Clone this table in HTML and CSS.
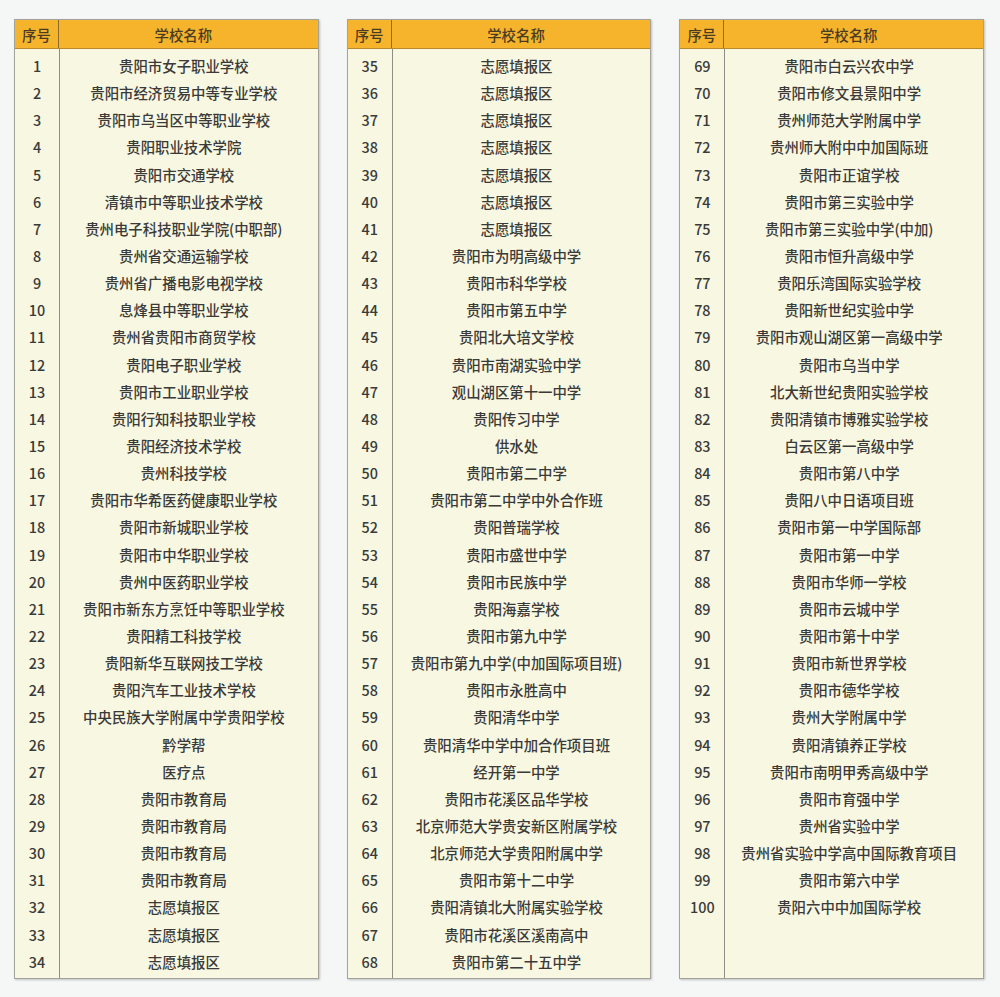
FILE: index.html
```html
<!DOCTYPE html>
<html lang="zh-CN">
<head>
<meta charset="utf-8">
<title>学校名称</title>
<link rel="stylesheet" href="styles.css">
</head>
<body>
<div class="page">
  <section class="tbl">
    <div class="head"><div class="h-no">序号</div><div class="h-name">学校名称</div></div>
    <div class="body">
      <div class="row"><span class="no">1</span><span class="name">贵阳市女子职业学校</span></div>
      <div class="row"><span class="no">2</span><span class="name">贵阳市经济贸易中等专业学校</span></div>
      <div class="row"><span class="no">3</span><span class="name">贵阳市乌当区中等职业学校</span></div>
      <div class="row"><span class="no">4</span><span class="name">贵阳职业技术学院</span></div>
      <div class="row"><span class="no">5</span><span class="name">贵阳市交通学校</span></div>
      <div class="row"><span class="no">6</span><span class="name">清镇市中等职业技术学校</span></div>
      <div class="row"><span class="no">7</span><span class="name">贵州电子科技职业学院(中职部)</span></div>
      <div class="row"><span class="no">8</span><span class="name">贵州省交通运输学校</span></div>
      <div class="row"><span class="no">9</span><span class="name">贵州省广播电影电视学校</span></div>
      <div class="row"><span class="no">10</span><span class="name">息烽县中等职业学校</span></div>
      <div class="row"><span class="no">11</span><span class="name">贵州省贵阳市商贸学校</span></div>
      <div class="row"><span class="no">12</span><span class="name">贵阳电子职业学校</span></div>
      <div class="row"><span class="no">13</span><span class="name">贵阳市工业职业学校</span></div>
      <div class="row"><span class="no">14</span><span class="name">贵阳行知科技职业学校</span></div>
      <div class="row"><span class="no">15</span><span class="name">贵阳经济技术学校</span></div>
      <div class="row"><span class="no">16</span><span class="name">贵州科技学校</span></div>
      <div class="row"><span class="no">17</span><span class="name">贵阳市华希医药健康职业学校</span></div>
      <div class="row"><span class="no">18</span><span class="name">贵阳市新城职业学校</span></div>
      <div class="row"><span class="no">19</span><span class="name">贵阳市中华职业学校</span></div>
      <div class="row"><span class="no">20</span><span class="name">贵州中医药职业学校</span></div>
      <div class="row"><span class="no">21</span><span class="name">贵阳市新东方烹饪中等职业学校</span></div>
      <div class="row"><span class="no">22</span><span class="name">贵阳精工科技学校</span></div>
      <div class="row"><span class="no">23</span><span class="name">贵阳新华互联网技工学校</span></div>
      <div class="row"><span class="no">24</span><span class="name">贵阳汽车工业技术学校</span></div>
      <div class="row"><span class="no">25</span><span class="name">中央民族大学附属中学贵阳学校</span></div>
      <div class="row"><span class="no">26</span><span class="name">黔学帮</span></div>
      <div class="row"><span class="no">27</span><span class="name">医疗点</span></div>
      <div class="row"><span class="no">28</span><span class="name">贵阳市教育局</span></div>
      <div class="row"><span class="no">29</span><span class="name">贵阳市教育局</span></div>
      <div class="row"><span class="no">30</span><span class="name">贵阳市教育局</span></div>
      <div class="row"><span class="no">31</span><span class="name">贵阳市教育局</span></div>
      <div class="row"><span class="no">32</span><span class="name">志愿填报区</span></div>
      <div class="row"><span class="no">33</span><span class="name">志愿填报区</span></div>
      <div class="row"><span class="no">34</span><span class="name">志愿填报区</span></div>
    </div>
  </section>
  <section class="tbl">
    <div class="head"><div class="h-no">序号</div><div class="h-name">学校名称</div></div>
    <div class="body">
      <div class="row"><span class="no">35</span><span class="name">志愿填报区</span></div>
      <div class="row"><span class="no">36</span><span class="name">志愿填报区</span></div>
      <div class="row"><span class="no">37</span><span class="name">志愿填报区</span></div>
      <div class="row"><span class="no">38</span><span class="name">志愿填报区</span></div>
      <div class="row"><span class="no">39</span><span class="name">志愿填报区</span></div>
      <div class="row"><span class="no">40</span><span class="name">志愿填报区</span></div>
      <div class="row"><span class="no">41</span><span class="name">志愿填报区</span></div>
      <div class="row"><span class="no">42</span><span class="name">贵阳市为明高级中学</span></div>
      <div class="row"><span class="no">43</span><span class="name">贵阳市科华学校</span></div>
      <div class="row"><span class="no">44</span><span class="name">贵阳市第五中学</span></div>
      <div class="row"><span class="no">45</span><span class="name">贵阳北大培文学校</span></div>
      <div class="row"><span class="no">46</span><span class="name">贵阳市南湖实验中学</span></div>
      <div class="row"><span class="no">47</span><span class="name">观山湖区第十一中学</span></div>
      <div class="row"><span class="no">48</span><span class="name">贵阳传习中学</span></div>
      <div class="row"><span class="no">49</span><span class="name">供水处</span></div>
      <div class="row"><span class="no">50</span><span class="name">贵阳市第二中学</span></div>
      <div class="row"><span class="no">51</span><span class="name">贵阳市第二中学中外合作班</span></div>
      <div class="row"><span class="no">52</span><span class="name">贵阳普瑞学校</span></div>
      <div class="row"><span class="no">53</span><span class="name">贵阳市盛世中学</span></div>
      <div class="row"><span class="no">54</span><span class="name">贵阳市民族中学</span></div>
      <div class="row"><span class="no">55</span><span class="name">贵阳海嘉学校</span></div>
      <div class="row"><span class="no">56</span><span class="name">贵阳市第九中学</span></div>
      <div class="row"><span class="no">57</span><span class="name">贵阳市第九中学(中加国际项目班)</span></div>
      <div class="row"><span class="no">58</span><span class="name">贵阳市永胜高中</span></div>
      <div class="row"><span class="no">59</span><span class="name">贵阳清华中学</span></div>
      <div class="row"><span class="no">60</span><span class="name">贵阳清华中学中加合作项目班</span></div>
      <div class="row"><span class="no">61</span><span class="name">经开第一中学</span></div>
      <div class="row"><span class="no">62</span><span class="name">贵阳市花溪区品华学校</span></div>
      <div class="row"><span class="no">63</span><span class="name">北京师范大学贵安新区附属学校</span></div>
      <div class="row"><span class="no">64</span><span class="name">北京师范大学贵阳附属中学</span></div>
      <div class="row"><span class="no">65</span><span class="name">贵阳市第十二中学</span></div>
      <div class="row"><span class="no">66</span><span class="name">贵阳清镇北大附属实验学校</span></div>
      <div class="row"><span class="no">67</span><span class="name">贵阳市花溪区溪南高中</span></div>
      <div class="row"><span class="no">68</span><span class="name">贵阳市第二十五中学</span></div>
    </div>
  </section>
  <section class="tbl">
    <div class="head"><div class="h-no">序号</div><div class="h-name">学校名称</div></div>
    <div class="body">
      <div class="row"><span class="no">69</span><span class="name">贵阳市白云兴农中学</span></div>
      <div class="row"><span class="no">70</span><span class="name">贵阳市修文县景阳中学</span></div>
      <div class="row"><span class="no">71</span><span class="name">贵州师范大学附属中学</span></div>
      <div class="row"><span class="no">72</span><span class="name">贵州师大附中中加国际班</span></div>
      <div class="row"><span class="no">73</span><span class="name">贵阳市正谊学校</span></div>
      <div class="row"><span class="no">74</span><span class="name">贵阳市第三实验中学</span></div>
      <div class="row"><span class="no">75</span><span class="name">贵阳市第三实验中学(中加)</span></div>
      <div class="row"><span class="no">76</span><span class="name">贵阳市恒升高级中学</span></div>
      <div class="row"><span class="no">77</span><span class="name">贵阳乐湾国际实验学校</span></div>
      <div class="row"><span class="no">78</span><span class="name">贵阳新世纪实验中学</span></div>
      <div class="row"><span class="no">79</span><span class="name">贵阳市观山湖区第一高级中学</span></div>
      <div class="row"><span class="no">80</span><span class="name">贵阳市乌当中学</span></div>
      <div class="row"><span class="no">81</span><span class="name">北大新世纪贵阳实验学校</span></div>
      <div class="row"><span class="no">82</span><span class="name">贵阳清镇市博雅实验学校</span></div>
      <div class="row"><span class="no">83</span><span class="name">白云区第一高级中学</span></div>
      <div class="row"><span class="no">84</span><span class="name">贵阳市第八中学</span></div>
      <div class="row"><span class="no">85</span><span class="name">贵阳八中日语项目班</span></div>
      <div class="row"><span class="no">86</span><span class="name">贵阳市第一中学国际部</span></div>
      <div class="row"><span class="no">87</span><span class="name">贵阳市第一中学</span></div>
      <div class="row"><span class="no">88</span><span class="name">贵阳市华师一学校</span></div>
      <div class="row"><span class="no">89</span><span class="name">贵阳市云城中学</span></div>
      <div class="row"><span class="no">90</span><span class="name">贵阳市第十中学</span></div>
      <div class="row"><span class="no">91</span><span class="name">贵阳市新世界学校</span></div>
      <div class="row"><span class="no">92</span><span class="name">贵阳市德华学校</span></div>
      <div class="row"><span class="no">93</span><span class="name">贵州大学附属中学</span></div>
      <div class="row"><span class="no">94</span><span class="name">贵阳清镇养正学校</span></div>
      <div class="row"><span class="no">95</span><span class="name">贵阳市南明甲秀高级中学</span></div>
      <div class="row"><span class="no">96</span><span class="name">贵阳市育强中学</span></div>
      <div class="row"><span class="no">97</span><span class="name">贵州省实验中学</span></div>
      <div class="row"><span class="no">98</span><span class="name">贵州省实验中学高中国际教育项目</span></div>
      <div class="row"><span class="no">99</span><span class="name">贵阳市第六中学</span></div>
      <div class="row"><span class="no">100</span><span class="name">贵阳六中中加国际学校</span></div>
    </div>
  </section>
</div>
</body>
</html>
```

FILE: styles.css
```css
html, body {
  margin: 0;
  padding: 0;
  background: #f5f6f6;
}

body {
  font-family: "Noto Sans CJK SC", "Noto Sans", sans-serif;
  color: #3a3a38;
}

.page {
  display: flex;
  gap: 28px;
  padding: 19px 16px 18px 14px;
  height: 960px;
}

.tbl {
  width: 304px;
  display: flex;
  flex-direction: column;
  border: 1px solid #a3a29c;
  box-shadow: 1px 1px 2px rgba(0, 0, 0, 0.22);
  background: #f8f7e2;
}

.head {
  display: grid;
  grid-template-columns: 44px 1fr;
  height: 28px;
  background: #f6b42d;
  border-bottom: 1px solid #b88a2a;
  color: #4a3c22;
  font-size: 14.4px;
  font-weight: 500;
}

.h-no,
.h-name {
  display: flex;
  align-items: center;
  justify-content: center;
}

.h-no {
  border-right: 1px solid #8c6a28;
}

.h-name {
  padding-right: 10px;
}

.body {
  flex: 1;
  padding: 3px 0;
  background:
    linear-gradient(to right, transparent 44px, #8e8d86 44px, #8e8d86 45px, transparent 45px),
    #f8f7e2;
}

.row {
  display: grid;
  grid-template-columns: 45px 1fr;
  height: 27.15px;
  align-items: center;
  font-size: 14.4px;
  font-weight: 500;
  white-space: nowrap;
}

.no,
.name {
  text-align: center;
}

.no {
  padding-right: 1px;
}

.name {
  padding-right: 10px;
}
```
